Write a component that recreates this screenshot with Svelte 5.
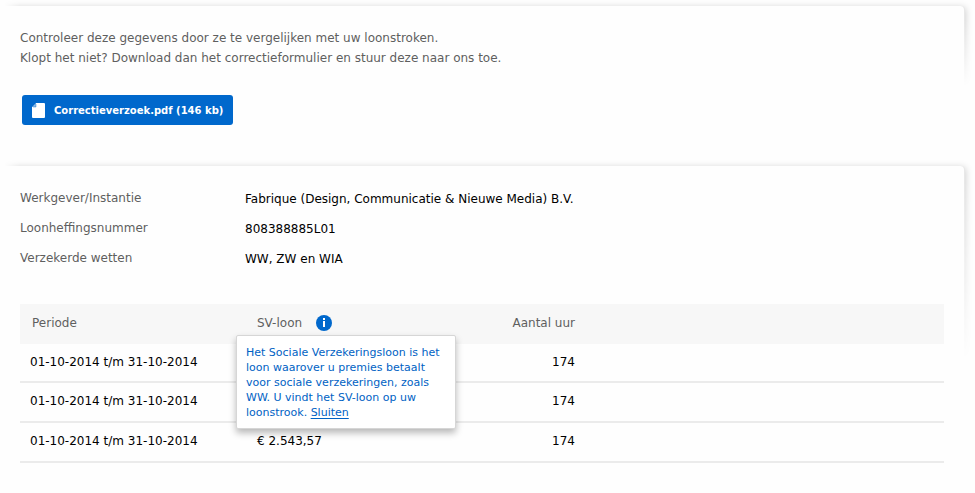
<script>
  let open = $state(true);

  const details = [
    { label: 'Werkgever/Instantie', value: 'Fabrique (Design, Communicatie & Nieuwe Media) B.V.' },
    { label: 'Loonheffingsnummer', value: '808388885L01' },
    { label: 'Verzekerde wetten', value: 'WW, ZW en WIA' }
  ];

  const rows = [
    { period: '01-10-2014 t/m 31-10-2014', wage: '€ 2.543,57', hours: 174 },
    { period: '01-10-2014 t/m 31-10-2014', wage: '€ 2.543,57', hours: 174 },
    { period: '01-10-2014 t/m 31-10-2014', wage: '€ 2.543,57', hours: 174 }
  ];

  // The open tooltip lies over the wages of this many rows.
  const coveredRows = 2;

  function close(event) {
    event.preventDefault();
    open = false;
  }
</script>

<main>
  <section class="panel intro">
    <div class="edge short" aria-hidden="true"></div>
    <p>
      Controleer deze gegevens door ze te vergelijken met uw loonstroken.<br />
      Klopt het niet? Download dan het correctieformulier en stuur deze naar ons toe.
    </p>
    <button class="download" type="button">
      <svg width="13" height="15" viewBox="0 0 13 15" aria-hidden="true">
        <path d="M4 0H12Q13 0 13 1V14Q13 15 12 15H1Q0 15 0 14V4H4Z" fill="#fff" />
        <path d="M4 0V4H0Z" fill="#8fbce8" />
        <path d="M4 1V4H1" fill="none" stroke="#0068cc" stroke-opacity="0.4" />
      </svg>
      <span>Correctieverzoek.pdf (146 kb)</span>
    </button>
  </section>

  <section class="panel">
    <div class="edge" aria-hidden="true"></div>
    <dl>
      {#each details as item}
        <div>
          <dt>{item.label}</dt>
          <dd>{item.value}</dd>
        </div>
      {/each}
    </dl>

    <table>
      <thead>
        <tr>
          <th class="period" scope="col">Periode</th>
          <th class="wage" scope="col">
            <div class="heading">
              <span>SV-loon</span>
              <button class="info" type="button" aria-label="Uitleg SV-loon" onclick={() => (open = !open)}>
                <svg width="16" height="16" viewBox="0 0 16 16" aria-hidden="true">
                  <circle cx="8" cy="8" r="8" fill="#0068cc" />
                  <rect x="7" y="3" width="2" height="2" fill="#fff" />
                  <rect x="7" y="6" width="2" height="6" fill="#fff" />
                </svg>
              </button>
              {#if open}
                <div class="tooltip" role="note">
                  Het Sociale Verzekeringsloon is het loon waarover u premies betaalt voor sociale
                  verzekeringen, zoals WW. U vindt het SV-loon op uw loonstrook.
                  <a href="#sluiten" onclick={close}>Sluiten</a>
                </div>
              {/if}
            </div>
          </th>
          <th class="hours" scope="col">Aantal uur</th>
          <td></td>
        </tr>
      </thead>
      <tbody>
        {#each rows as row, i}
          <tr>
            <td>{row.period}</td>
            <td class="wage">
              {#if !open || i >= coveredRows}{row.wage}{/if}
            </td>
            <td class="hours">{row.hours}</td>
            <td></td>
          </tr>
        {/each}
      </tbody>
    </table>
  </section>
</main>

<style>
  :global(body) {
    margin: 0;
    background: #fefefe;
  }

  main {
    padding: 6px 11px 0 0;
    overflow: hidden;
    font: 12px/20px Verdana, 'DejaVu Sans', sans-serif;
    color: #000;
  }

  .panel {
    position: relative;
    padding: 22px 20px 30px;
  }

  .intro {
    padding-bottom: 41px;
    color: #5f5f5f;
  }

  /* Shadow along the top and right side that fades out to the left and downwards. */
  .edge {
    position: absolute;
    top: -6px;
    right: -11px;
    left: 0;
    height: 200px;
    overflow: hidden;
    pointer-events: none;
    mask-image: linear-gradient(#000 20px, transparent), linear-gradient(90deg, transparent 4px, #000 20px);
    mask-composite: intersect;
  }

  .edge.short {
    height: 86px;
  }

  .edge::before {
    content: '';
    position: absolute;
    inset: 6px 11px -20px 0;
    border-radius: 0 4px 0 0;
    background: #fefefe;
    box-shadow: 1px 0 0 #e8e8e8, 2px 1px 7px rgba(0, 0, 0, 0.18);
  }

  p {
    position: relative;
    margin: 0 0 27px;
  }

  .download {
    position: relative;
    display: flex;
    align-items: center;
    gap: 9px;
    height: 30px;
    margin: 0 2px;
    padding: 0 10px;
    border: 0;
    border-radius: 3px;
    background: #0068cc;
    color: #fff;
    font: bold 10px/15px Verdana, 'DejaVu Sans', sans-serif;
    white-space: nowrap;
  }

  dl {
    position: relative;
    display: grid;
    gap: 9px;
    margin: 0 0 35px;
  }

  dl div {
    display: grid;
    grid-template-columns: 225px 1fr;
  }

  dt {
    color: #5f5f5f;
  }

  dd {
    margin: 0;
    padding-top: 1px;
  }

  table {
    position: relative;
    width: 100%;
    border-collapse: separate;
    border-spacing: 0;
    table-layout: fixed;
  }

  thead th,
  thead td {
    height: 38px;
    padding-bottom: 2px;
    background: #f7f7f7;
    color: #5f5f5f;
    font-weight: normal;
    text-align: left;
  }

  th {
    padding: 0 12px;
  }

  .period {
    width: 201px;
  }

  td {
    height: 36px;
    padding: 0 10px 2px;
    border-bottom: 2px solid #ebebeb;
  }

  thead td {
    border: 0;
  }

  tbody tr:first-child td {
    height: 35px;
  }

  .wage {
    width: 206px;
    padding: 0 12px 2px;
  }

  .hours {
    width: 90px;
    padding: 0 10px 2px;
    text-align: right;
  }

  thead .hours {
    text-align: right;
  }

  .heading {
    position: relative;
    display: flex;
    align-items: center;
    gap: 14px;
  }

  .info {
    display: flex;
    padding: 0;
    border: 0;
    background: none;
    cursor: pointer;
  }

  .tooltip {
    position: absolute;
    top: 22px;
    left: -21px;
    z-index: 1;
    box-sizing: border-box;
    width: 220px;
    padding: 9px 8px 8px 9px;
    border: 1px solid #d6d6d6;
    border-radius: 2px;
    background: #fff;
    box-shadow: 0 4px 7px rgba(0, 0, 0, 0.28);
    color: #0062c4;
    font-size: 11px;
    line-height: 15px;
  }

  a {
    color: inherit;
    text-underline-offset: 2px;
  }
</style>
